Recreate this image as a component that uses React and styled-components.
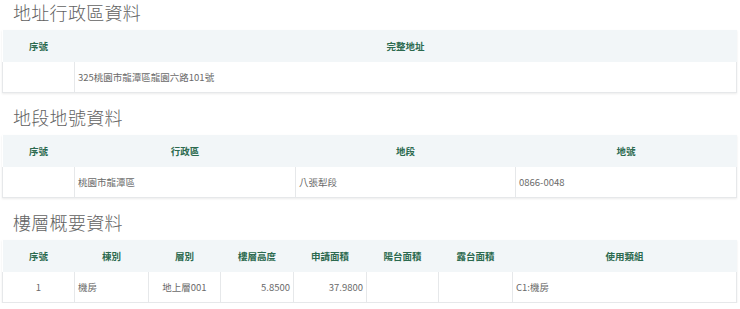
import React from 'react';
import styled, { createGlobalStyle } from "styled-components";

const GlobalStyle = createGlobalStyle`
  body {
    margin: 0;
    background: #fff;
    font-family: "Noto Sans CJK TC", "Noto Sans", sans-serif;
  }
`;

const Page = styled.div`
  padding: 0 4px 0 2px;
`;

const Section = styled.section`
  & + & {
    margin-top: 12px;
  }
`;

const Title = styled.h2`
  margin: 0 0 6px 11px;
  font-size: 18px;
  line-height: 24px;
  font-weight: 300;
  color: #626262;
  letter-spacing: 0.3px;
`;

const Table = styled.table`
  width: 100%;
  table-layout: fixed;
  border-collapse: collapse;
  box-shadow: 0 1px 2px rgba(0, 0, 0, 0.08);
`;

const Th = styled.th`
  height: 32px;
  padding: 0 3px;
  background: #f2f6f8;
  color: #2c6a4f;
  font-size: 9.5px;
  font-weight: 600;
  text-align: center;
`;

const Td = styled.td`
  height: 30px;
  padding: 0 3px;
  border: 1px solid #e6e8ea;
  border-top: none;
  color: #6a6a6a;
  font-size: 9.5px;
  text-align: ${props => props.align || 'left'};
`;

const sections = [
  {
    title: '地址行政區資料',
    cols: [72, 662],
    heads: ['序號', '完整地址'],
    rows: [[['', 'center'], ['325桃園市龍潭區龍園六路101號']]],
  },
  {
    title: '地段地號資料',
    cols: [72, 221, 220, 221],
    heads: ['序號', '行政區', '地段', '地號'],
    rows: [[['', 'center'], ['桃園市龍潭區'], ['八張犁段'], ['0866-0048']]],
  },
  {
    title: '樓層概要資料',
    cols: [72, 74, 72, 73, 73, 72, 74, 224],
    heads: ['序號', '棟別', '層別', '樓層高度', '申請面積', '陽台面積', '露台面積', '使用類組'],
    rows: [[
      ['1', 'center'], ['機房'], ['地上層001', 'center'], ['5.8500', 'right'],
      ['37.9800', 'right'], [''], [''], ['C1:機房'],
    ]],
  },
];

export default function App() {
  return (
    <>
      <GlobalStyle />
      <Page>
        {sections.map(s => (
          <Section key={s.title}>
            <Title>{s.title}</Title>
            <Table>
              <colgroup>
                {s.cols.map((w, i) => <col key={i} width={w} />)}
              </colgroup>
              <thead>
                <tr>
                  {s.heads.map(h => <Th key={h}>{h}</Th>)}
                </tr>
              </thead>
              <tbody>
                {s.rows.map((r, ri) => (
                  <tr key={ri}>
                    {r.map(([text, align], ci) => (
                      <Td key={ci} align={align}>{text}</Td>
                    ))}
                  </tr>
                ))}
              </tbody>
            </Table>
          </Section>
        ))}
      </Page>
    </>
  );
}
